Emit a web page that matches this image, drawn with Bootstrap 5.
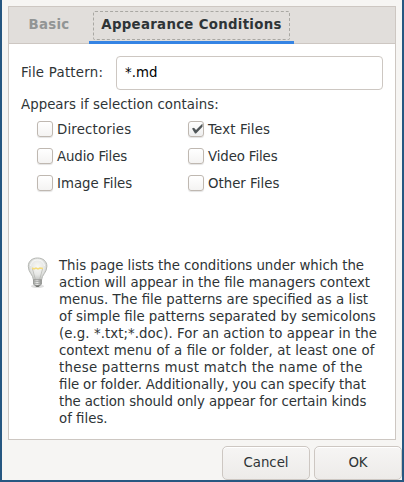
<!DOCTYPE html>
<html lang="en">
<head>
<meta charset="utf-8">
<meta name="viewport" content="width=device-width, initial-scale=1">
<title>Appearance Conditions</title>
<link href="https://cdn.jsdelivr.net/npm/bootstrap@5.3.0/dist/css/bootstrap.min.css" rel="stylesheet">
<style>
body{font:13.33px/17px "DejaVu Sans",sans-serif;color:#2e3436;background:#f6f5f3;overflow:hidden}
.dialog{width:404px;height:482px;border:2px solid #265781;border-top:0;padding:6px 0 0;background:#f6f5f3}
.panel{width:388px;height:434px;margin-left:6px;border:1px solid #cdc7c2;background:#fff}
.tabs{height:37px;background:#e1dedb;border-bottom:1px solid #cdc7c2}
.tabs .nav-link{font-weight:700;font-size:13.33px;line-height:17px;letter-spacing:.3px;color:#929595;padding:0;border:0;border-radius:0;height:37px}
.tab-basic{width:80px;padding-bottom:2px!important}
.tabs .tab-current{width:205px;color:#2e3436;border-bottom:3px solid #3584e4;padding:4px 4px 2px}
.focus-line{height:29px;border:1px dashed #a9a8a3;border-radius:2px;padding-bottom:3px}
.pattern-row{padding:12px 12px 0;height:46px}
.pattern-row .form-control{width:267px;height:34px;font:inherit;color:#000;border:1px solid #cdc7c2;border-radius:4px;padding:0 8px 2px;box-shadow:none}
.pattern-row label{width:95px;padding-bottom:2px;letter-spacing:.25px}
.caption{padding:6px 12px 0;height:25px;letter-spacing:.03px}
.checks{padding:6px 0 0 28px;display:grid;grid-template-columns:151px 151px;grid-auto-rows:27px}
.checks .form-check-input{width:16px;height:16px;margin:0 4px 0 0;border:1px solid #bfb8b1;border-radius:3px;background:linear-gradient(#fff,#f4f3f2);box-shadow:0 1px 1px #0000001c;flex:none}
.checks label{height:16px}
.loose{letter-spacing:.17px}
.tight{letter-spacing:-.12px}
.checks .form-check-input:checked{background:url("data:image/svg+xml,%3Csvg xmlns='http://www.w3.org/2000/svg' viewBox='0 0 14 14'%3E%3Cpath d='M3 6.5L5 5.7L7 8L13.5 1.5V4.8L7 11.5H6Z' fill='%23505658'/%3E%3C/svg%3E") 0 0/14px 14px no-repeat,linear-gradient(#fff,#eee)}
.hint{padding:55px 0 0 12px}
.hint svg{flex:none;margin-right:6px}
.hint p{white-space:nowrap}
.hint p span{display:block}
.hint p span:nth-child(1){letter-spacing:-.04px}
.hint p span:nth-child(3){word-spacing:.1px}
.hint p span:nth-child(5){letter-spacing:.06px}
.hint p span:nth-child(6){word-spacing:.35px}
.hint p span:nth-child(7){letter-spacing:.27px}
.hint p span:nth-child(8){word-spacing:-.5px}
.hint p span:nth-child(9){letter-spacing:-.1px}
.actions{padding:6px 0 0;gap:4px}
.actions .btn{width:88px;height:34px;padding:0 0 2px;font:inherit;color:#2e3436;border:1px solid #cdc7c2;border-radius:5px;background:linear-gradient(#f6f5f4,#edebe9);box-shadow:inset 0 1px #fff}
</style>
<script src="https://cdn.jsdelivr.net/npm/bootstrap@5.3.0/dist/js/bootstrap.bundle.min.js"></script>
</head>
<body>
<main class="dialog">
<section class="panel">
<nav class="nav tabs d-flex flex-nowrap">
<a class="nav-link tab-basic d-flex align-items-center justify-content-center" href="#">Basic</a>
<a class="nav-link tab-current" href="#"><span class="focus-line d-flex align-items-center justify-content-center">Appearance Conditions</span></a>
</nav>
<div class="pattern-row d-flex align-items-center">
<label for="pattern">File Pattern:</label><input class="form-control" id="pattern" value="*.md">
</div>
<div class="caption">Appears if selection contains:</div>
<div class="checks">
<label class="d-flex align-items-center loose"><input class="form-check-input" type="checkbox">Directories</label>
<label class="d-flex align-items-center loose"><input class="form-check-input" type="checkbox" checked>Text Files</label>
<label class="d-flex align-items-center tight"><input class="form-check-input" type="checkbox">Audio Files</label>
<label class="d-flex align-items-center tight"><input class="form-check-input" type="checkbox">Video Files</label>
<label class="d-flex align-items-center"><input class="form-check-input" type="checkbox">Image Files</label>
<label class="d-flex align-items-center"><input class="form-check-input" type="checkbox">Other Files</label>
</div>
<div class="hint d-flex align-items-start">
<svg width="32" height="32" viewBox="0 0 32 32" aria-hidden="true">
<defs>
<radialGradient id="glass" cx=".5" cy=".4" r=".6"><stop offset="0" stop-color="#f8f8f6"/><stop offset=".6" stop-color="#e6e7e5"/><stop offset="1" stop-color="#c2c4c1"/></radialGradient>
<linearGradient id="base"><stop offset="0" stop-color="#a3a5a2"/><stop offset=".45" stop-color="#f0f0ef"/><stop offset="1" stop-color="#858784"/></linearGradient>
</defs>
<ellipse cx="16.5" cy="29.2" rx="6.5" ry="1.8" fill="#000" opacity=".13"/>
<path d="M12.5 23C12 17.5 7.3 15.5 7.3 9.3C7.3 4.1 11.2 1 16.5 1S25.9 4.1 25.9 9.3C25.9 15.5 21 17.5 20.5 23Z" fill="url(#glass)" stroke="#b5b7b3"/>
<path d="M9.5 9C10 5 13 3 16.5 3S23 5 23.5 9" fill="none" stroke="#fff" opacity=".7"/>
<path d="M14.5 23L11.5 12M18.5 23L21.5 12" fill="none" stroke="#b9bab5" stroke-width=".8"/>
<path d="M11 11L13 12L15 11L17 12L19 11L22 11.5" fill="none" stroke="#f4dc7c" stroke-width="1.5"/>
<path d="M12.5 22.8H20.5V27L18.5 29H14.5L12.5 27Z" fill="url(#base)" stroke="#8f918e" stroke-width=".8"/>
<path d="M12.5 24.8L20.5 24.2M12.5 26.8L20.5 26.2" stroke="#9a9c99" stroke-width=".7"/>
<path d="M14 28.5H19L17.5 29.8H15.5Z" fill="#555753"/>
</svg>
<p class="mb-0"><span>This page lists the conditions under which the</span><span>action will appear in the file managers context</span><span>menus. The file patterns are specified as a list</span><span>of simple file patterns separated by semicolons</span><span>(e.g. *.txt;*.doc). For an action to appear in the</span><span>context menu of a file or folder, at least one of</span><span>these patterns must match the name of the</span><span>file or folder. Additionally, you can specify that</span><span>the action should only appear for certain kinds</span><span>of files.</span></p>
</div>
</section>
<div class="actions d-flex justify-content-end">
<button class="btn" type="button">Cancel</button><button class="btn" type="button">OK</button>
</div>
</main>
</body>
</html>
